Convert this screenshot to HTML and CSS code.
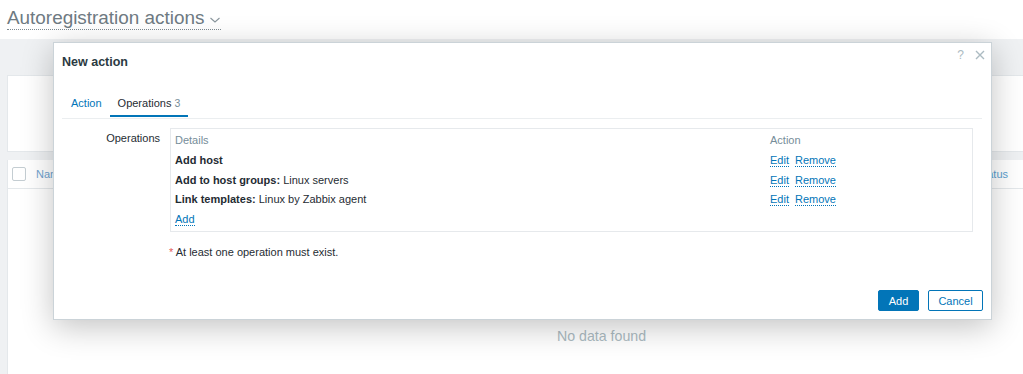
FILE: index.html
```html
<!DOCTYPE html>
<html>
<head>
<meta charset="utf-8">
<link rel="stylesheet" href="styles.css">
</head>
<body>
<div class="header">
  <span class="page-title">Autoregistration actions<svg class="chev" width="12" height="8" viewBox="0 0 12 8"><path d="M1.5 2 L6 6 L10.5 2" fill="none" stroke="#8a969d" stroke-width="1.1"/></svg></span>
</div>
<div class="main">
  <div class="filter"></div>
  <div class="list">
    <div class="list-head">
      <span class="checkbox"></span>
      <span class="col-name">Name</span>
      <span class="col-status">Status</span>
    </div>
    <div class="no-data">No data found</div>
  </div>
</div>

<div class="modal">
  <div class="modal-controls">
    <span class="help">?</span>
    <svg class="close" width="10" height="10" viewBox="0 0 10 10"><path d="M1 1 L9 9 M9 1 L1 9" stroke="#acbbc2" stroke-width="1.4"/></svg>
  </div>
  <div class="modal-head">New action</div>
  <div class="tabs">
    <span class="tab">Action</span>
    <span class="tab active">Operations <span class="count">3</span></span>
  </div>
  <div class="form-row">
    <div class="label">Operations</div>
    <div class="field">
      <div class="ops-box">
        <table class="ops">
          <colgroup><col class="c1"><col></colgroup>
          <tr class="th"><td>Details</td><td>Action</td></tr>
          <tr><td><b>Add host</b></td><td><span class="link">Edit</span><span class="link">Remove</span></td></tr>
          <tr><td><b>Add to host groups:</b> Linux servers</td><td><span class="link">Edit</span><span class="link">Remove</span></td></tr>
          <tr><td><b>Link templates:</b> Linux by Zabbix agent</td><td><span class="link">Edit</span><span class="link">Remove</span></td></tr>
          <tr><td><span class="link">Add</span></td><td></td></tr>
        </table>
      </div>
      <div class="error"><span class="star">*</span> At least one operation must exist.</div>
    </div>
  </div>
  <div class="modal-foot">
    <button class="btn primary">Add</button>
    <button class="btn secondary">Cancel</button>
  </div>
</div>
</body>
</html>
```
FILE: styles.css
```css
html, body {
  margin: 0;
  padding: 0;
}
body {
  background: #eff1f3;
  font-family: "Liberation Sans", Arial, sans-serif;
  font-size: 11px;
  color: #1f2c33;
  width: 1023px;
  height: 374px;
  overflow: hidden;
  position: relative;
}
.header {
  background: #fff;
  height: 39px;
  padding-left: 7px;
  box-sizing: border-box;
  padding-top: 7px;
}
.page-title {
  display: inline-flex;
  align-items: center;
  font-size: 18.9px;
  line-height: 22px;
  color: #6e7a82;
  border-bottom: 1px dotted #7e8a91;
}
.chev {
  margin-left: 5px;
  margin-top: 3px;
}
.main {
  padding-left: 7px;
}
.filter {
  margin-top: 36px;
  height: 77px;
  background: #fff;
  border: 1px solid #e4e8eb;
  border-right: none;
  box-sizing: border-box;
}
.list {
  margin-top: 8px;
  background: #fff;
  border-left: 1px solid #e4e8eb;
  height: 214px;
}
.list-head {
  height: 28px;
  border-bottom: 1px solid #e4e8eb;
  display: flex;
  align-items: center;
  padding-left: 4px;
  position: relative;
}
.checkbox {
  width: 12px;
  height: 12px;
  border: 1px solid #c4cdd2;
  border-radius: 2px;
}
.col-name {
  margin-left: 10px;
  color: #6fa3cf;
  font-size: 11px;
}
.col-status {
  margin-left: auto;
  margin-right: 15px;
  color: #5a9fd0;
  font-size: 11px;
}
.no-data {
  text-align: center;
  padding-left: 172px;
  padding-top: 139px;
  font-size: 14.2px;
  line-height: 16px;
  color: #acbbc2;
}

/* modal */
.modal {
  position: absolute;
  left: 53px;
  top: 42px;
  width: 939px;
  height: 278px;
  box-sizing: border-box;
  background: #fff;
  border: 1px solid #cbd3d8;
  box-shadow: 0 7px 30px rgba(0, 0, 0, 0.24);
  padding: 0 9px 0 8px;
  display: flex;
  flex-direction: column;
}
.modal-controls {
  position: absolute;
  top: 5px;
  right: 6px;
  display: flex;
  align-items: center;
  gap: 11px;
}
.help {
  color: #acbbc2;
  font-size: 12px;
  line-height: 14px;
}
.close {
  display: block;
}
.modal-head {
  padding-top: 11px;
  font-size: 12.5px;
  font-weight: bold;
  line-height: 16px;
  color: #2b3a42;
}
.tabs {
  margin-top: 17px;
  display: flex;
  padding-left: 1px;
  padding-bottom: 1px;
  border-bottom: 1px solid #ebeef0;
}
.tab {
  padding: 8px 8px 4px;
  line-height: 16px;
  border-bottom: 2px solid transparent;
  color: #0275b8;
  font-size: 11px;
}
.tab.active {
  color: #1f2c33;
  border-bottom-color: #0275b8;
}
.count {
  color: #768d99;
  font-size: 10.5px;
}
.form-row {
  margin-top: 9px;
  display: grid;
  grid-template-columns: 98px 803px;
  column-gap: 10px;
}
.label {
  text-align: right;
  padding-top: 2px;
  line-height: 16px;
}
.ops-box {
  border: 1px solid #e6e9ec;
  padding: 2px 0 1px;
}
.ops {
  width: 100%;
  border-collapse: collapse;
  table-layout: fixed;
}
.ops col.c1 {
  width: 595px;
}
.ops td {
  padding: 2px 4px;
  line-height: 15.8px;
  white-space: nowrap;
}
.ops tr.th td {
  color: #768d99;
}
.ops b {
  font-weight: bold;
}
.link {
  color: #0275b8;
  border-bottom: 1px dotted #0275b8;
  margin-right: 6px;
}
.error {
  margin-top: 12px;
  margin-left: -1px;
  line-height: 16px;
}
.star {
  color: #e45959;
}
.modal-foot {
  margin-top: auto;
  padding-bottom: 8px;
  display: flex;
  justify-content: flex-end;
  gap: 9px;
  margin-right: -1px;
}
.btn {
  height: 21px;
  box-sizing: border-box;
  font-family: "Liberation Sans", Arial, sans-serif;
  font-size: 11px;
  border-radius: 2px;
  border: 1px solid #0275b8;
  padding: 0;
}
.primary {
  width: 41px;
  background: #0275b8;
  color: #fff;
}
.secondary {
  width: 55px;
  background: #fff;
  color: #0275b8;
}
```
